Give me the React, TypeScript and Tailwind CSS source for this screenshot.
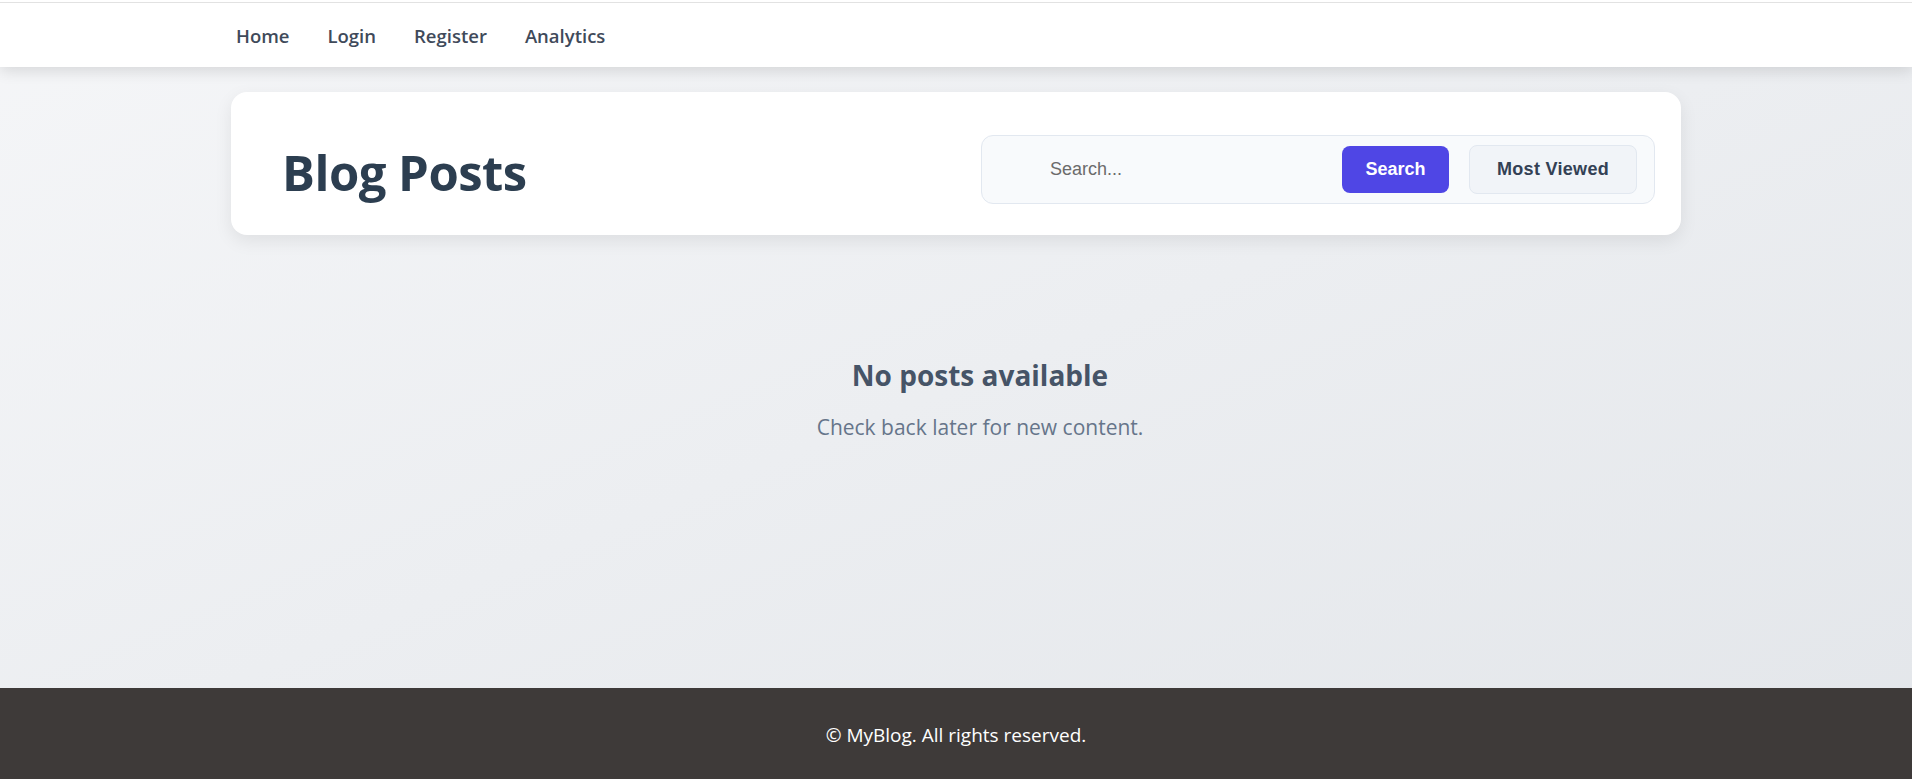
import { useState } from "react";

const links = ["Home", "Login", "Register", "Analytics"];

const Navbar = () => {
  return (
    <header className="bg-white pt-[2px] relative z-10 shadow-[0_4px_14px_rgba(0,0,0,0.12)]">
      <div className="border-t border-[#e2e2e2] h-[65px] flex items-center pt-[2px]">
        <nav className="w-[1450px] mx-auto px-[5px]">
          <ul className="flex gap-[38px]">
            {links.map((l) => (
              <li key={l}>
                <a href="#" className="text-[18.5px] font-semibold text-[#3f4a5a]">
                  {l}
                </a>
              </li>
            ))}
          </ul>
        </nav>
      </div>
    </header>
  );
};

export default function App() {
  const [query, setQuery] = useState("");
  return (
    <div className="min-h-screen flex flex-col bg-gradient-to-br from-[#f5f6f8] to-[#e3e6ea] font-['Open_Sans',sans-serif]">
      <Navbar />
      <main className="flex-1">
        <div className="w-[1450px] mx-auto mt-[25px] bg-white rounded-2xl shadow-[0_6px_18px_rgba(0,0,0,0.08)] h-[143px] flex items-center justify-between pt-[12px] pl-[51px] pr-[26px]">
          <h1 className="pt-[7px] text-[49px] font-bold text-[#2c3e50] tracking-[-0.5px]">Blog Posts</h1>
          <div className="flex items-center w-[674px] h-[69px] bg-[#f8fafc] border border-[#e2e8f0] rounded-xl pl-[68px] pr-[17px] font-['Liberation_Sans',sans-serif]">
            <input
              value={query}
              onChange={(e) => setQuery(e.target.value)}
              placeholder="Search..."
              className="flex-1 min-w-0 bg-transparent outline-none text-[18px] text-[#374151] placeholder:text-[#6b6b6b]"
            />
            <button className="w-[107px] h-[47px] rounded-lg bg-[#4f46e5] text-white text-[18px] font-bold">
              Search
            </button>
            <button className="ml-[20px] w-[168px] h-[49px] rounded-lg bg-[#f1f4f8] border border-[#e2e8f0] text-[#334155] text-[18px] font-bold tracking-[0.3px]">
              Most Viewed
            </button>
          </div>
        </div>
        <div className="text-center mt-[119px] pl-[48px]">
          <h2 className="text-[28px] font-bold text-[#465467]">No posts available</h2>
          <p className="mt-[16px] text-[21px] text-[#66758a]">Check back later for new content.</p>
        </div>
      </main>
      <footer className="bg-[#3e3a39] h-[91px] flex items-center justify-center pt-[4px]">
        <p className="text-white text-[19px]">© MyBlog. All rights reserved.</p>
      </footer>
    </div>
  );
}
